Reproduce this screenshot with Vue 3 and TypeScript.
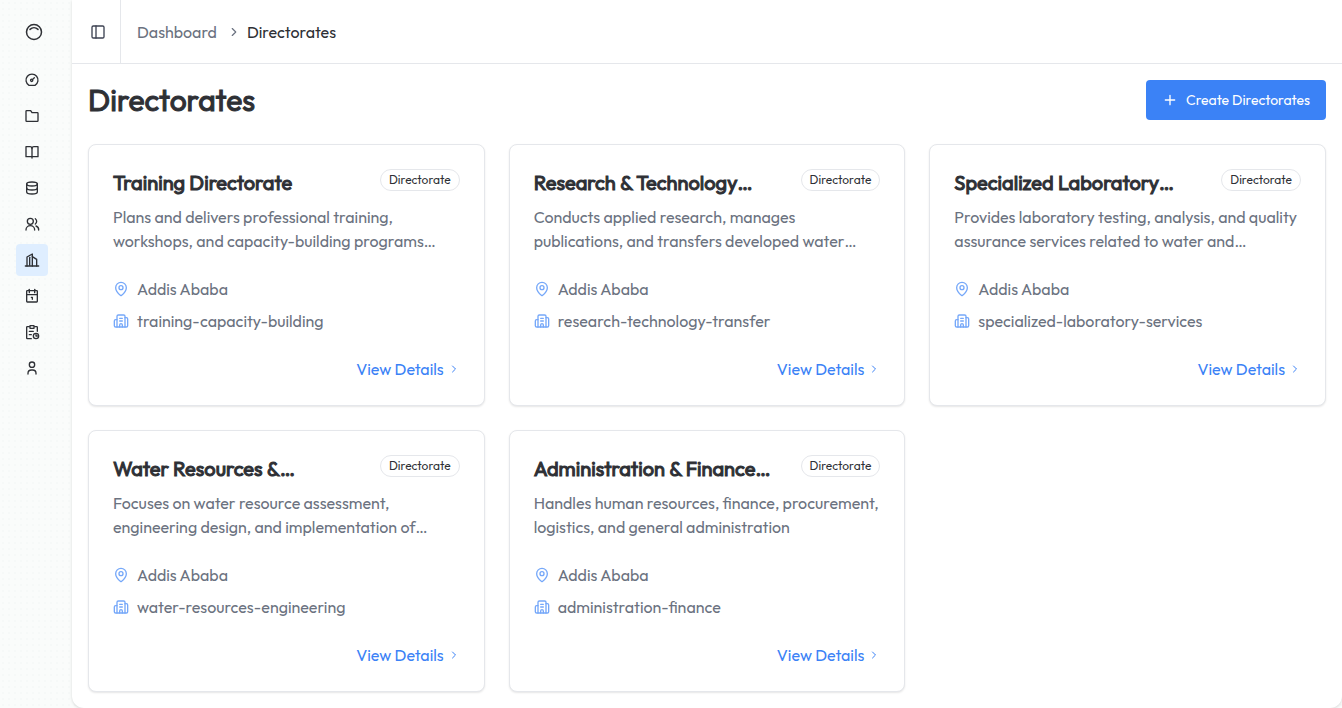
<script setup lang="ts">
interface NavItem {
  label: string
  paths: string[]
  active?: boolean
}

interface Directorate {
  title: string
  description: string
  location: string
  slug: string
}

const navItems: NavItem[] = [
  {
    label: 'Dashboard',
    paths: [
      'M7.5 20A9 9 0 1 1 16.5 20Z',
      'M13.2 12.5a1.7 1.7 0 1 1-3.4 0 1.7 1.7 0 0 1 3.4 0Z',
      'M12.6 11.4 15.5 8.5',
    ],
  },
  { label: 'Files', paths: ['M4 4h6l2 3h8a1 1 0 0 1 1 1v11a1 1 0 0 1-1 1H4a1 1 0 0 1-1-1V5a1 1 0 0 1 1-1Z'] },
  { label: 'Library', paths: ['M3 4h6a3 3 0 0 1 3 3 3 3 0 0 1 3-3h6v15H3Z', 'M12 7v14'] },
  {
    label: 'Data',
    paths: [
      'M4 6c0-4 16-4 16 0s-16 4-16 0Z',
      'M4 6v12c0 4 16 4 16 0V6',
      'M4 12c0 4 16 4 16 0',
    ],
  },
  {
    label: 'Users',
    paths: [
      'M3 21a6 6 0 0 1 13 0',
      'M14 8a4 4 0 1 1-9 0 4 4 0 0 1 9 0Z',
      'M17 4a5 5 0 0 1 0 8',
      'M18 15a6 6 0 0 1 4 6',
    ],
  },
  {
    label: 'Directorates',
    active: true,
    paths: ['M2 21h20', 'M4.5 21V7.5L12.5 3v18', 'M12.5 7l6.5 4v10', 'M8.5 8v12'],
  },
  {
    label: 'Calendar',
    paths: ['M5 4h14a1 1 0 0 1 1 1v15a1 1 0 0 1-1 1H5a1 1 0 0 1-1-1V5a1 1 0 0 1 1-1Z', 'M8 2v5', 'M16 2v5', 'M4 10h16', 'M11 14h1.5v3'],
  },
  {
    label: 'Tasks',
    paths: [
      'M8 4H5a1 1 0 0 0-1 1v16a1 1 0 0 0 1 1h6',
      'M16 4h3a1 1 0 0 1 1 1v6',
      'M9 2.5h6v4H9Z',
      'M8 11h6',
      'M8 16h3',
      'M22 18a4 4 0 1 1-8 0 4 4 0 0 1 8 0Z',
      'M18 16v2h2',
    ],
  },
  { label: 'Profile', paths: ['M16 7a4 4 0 1 1-8 0 4 4 0 0 1 8 0Z', 'M6 21v-1a5 5 0 0 1 5-5h2a5 5 0 0 1 5 5v1'] },
]

const directorates: Directorate[] = [
  {
    title: 'Training Directorate',
    description: 'Plans and delivers professional training,\nworkshops, and capacity-building programs…',
    location: 'Addis Ababa',
    slug: 'training-capacity-building',
  },
  {
    title: 'Research & Technology…',
    description: 'Conducts applied research, manages\npublications, and transfers developed water…',
    location: 'Addis Ababa',
    slug: 'research-technology-transfer',
  },
  {
    title: 'Specialized Laboratory…',
    description: 'Provides laboratory testing, analysis, and quality\nassurance services related to water and…',
    location: 'Addis Ababa',
    slug: 'specialized-laboratory-services',
  },
  {
    title: 'Water Resources &…',
    description: 'Focuses on water resource assessment,\nengineering design, and implementation of…',
    location: 'Addis Ababa',
    slug: 'water-resources-engineering',
  },
  {
    title: 'Administration & Finance…',
    description: 'Handles human resources, finance, procurement,\nlogistics, and general administration',
    location: 'Addis Ababa',
    slug: 'administration-finance',
  },
]
</script>

<template>
  <div class="shell">
    <aside class="sidebar">
      <a class="logo" href="#" aria-label="Home">
        <svg class="logo-icon" viewBox="0 0 20 20">
          <circle cx="10" cy="10" r="7.5" />
          <path d="M6 7.4c2.3-2.2 5.7-2.2 8 0" />
        </svg>
      </a>
      <nav class="nav" aria-label="Main">
        <a
          v-for="item in navItems"
          :key="item.label"
          class="nav-link"
          :class="{ active: item.active }"
          href="#"
          :aria-label="item.label"
        >
          <svg class="icon" viewBox="0 0 24 24">
            <path v-for="d in item.paths" :key="d" :d="d" />
          </svg>
        </a>
      </nav>
    </aside>

    <main class="main">
      <header class="topbar">
        <button class="toggle" type="button" aria-label="Toggle sidebar">
          <svg class="icon" viewBox="0 0 24 24">
            <rect x="3" y="3" width="18" height="18" rx="2" />
            <path d="M9 3v18" />
          </svg>
        </button>
        <nav class="crumbs" aria-label="Breadcrumb">
          <a class="crumb" href="#">Dashboard</a>
          <svg class="crumb-sep" viewBox="0 0 24 24"><path d="m9 18 6-6-6-6" /></svg>
          <span class="crumb-current">Directorates</span>
        </nav>
      </header>

      <section class="content">
        <div class="heading">
          <h1>Directorates</h1>
          <button class="create" type="button">
            <svg class="icon" viewBox="0 0 24 24"><path d="M5 12h14M12 5v14" /></svg>
            Create Directorates
          </button>
        </div>

        <div class="grid">
          <article v-for="d in directorates" :key="d.slug" class="card">
            <div class="card-head">
              <h2>{{ d.title }}</h2>
              <span class="badge">Directorate</span>
            </div>
            <p class="description">{{ d.description }}</p>
            <ul class="facts">
              <li>
                <svg class="icon fact-icon" viewBox="0 0 24 24">
                  <path d="M20 10c0 4.993-5.539 10.193-7.399 11.799a1 1 0 0 1-1.202 0C9.539 20.193 4 14.993 4 10a8 8 0 0 1 16 0" />
                  <circle cx="12" cy="10" r="3" />
                </svg>
                {{ d.location }}
              </li>
              <li>
                <svg class="icon fact-icon" viewBox="0 0 24 24">
                  <path d="M10 12h4M10 8h4M14 21v-3a2 2 0 0 0-4 0v3" />
                  <path d="M6 10H4a2 2 0 0 0-2 2v7a2 2 0 0 0 2 2h16a2 2 0 0 0 2-2V9a2 2 0 0 0-2-2h-2" />
                  <path d="M6 21V5a2 2 0 0 1 2-2h8a2 2 0 0 1 2 2v16" />
                </svg>
                {{ d.slug }}
              </li>
            </ul>
            <a class="details" href="#">
              View Details
              <svg class="details-icon" viewBox="0 0 24 24"><path d="m9 18 6-6-6-6" /></svg>
            </a>
          </article>
        </div>
      </section>
    </main>
  </div>
</template>

<style>
body {
  margin: 0;
  background: #fafcfb;
}
</style>

<style scoped>
* {
  box-sizing: border-box;
}

.shell {
  display: flex;
  min-height: 100vh;
  font-family: Outfit, Lato, sans-serif;
  font-size: 16px;
  line-height: 24px;
  color: #2e3035;
  background-color: #fafcfb;
  background-image: radial-gradient(#f6f9f8 1px, transparent 1px);
  background-size: 6px 6px;
}

a {
  color: inherit;
  text-decoration: none;
}

button {
  font: inherit;
  border: 0;
  padding: 0;
  cursor: pointer;
}

svg {
  display: block;
  flex: none;
  fill: none;
  stroke: currentColor;
  stroke-width: 2;
  stroke-linecap: round;
  stroke-linejoin: round;
}

.icon {
  width: 16px;
  height: 16px;
}

.sidebar {
  flex: none;
  width: 72px;
  padding: 0 16px;
}

.logo {
  display: flex;
  align-items: center;
  height: 64px;
  padding-left: 8px;
}

.logo-icon {
  width: 20px;
  height: 20px;
  stroke-width: 1.5;
}

.nav {
  display: flex;
  flex-direction: column;
  gap: 4px;
}

.nav-link {
  display: flex;
  align-items: center;
  justify-content: center;
  width: 32px;
  height: 32px;
  border-radius: 4px;
}

.nav-link.active {
  background: #dfeeff;
}

.main {
  flex: 1;
  min-width: 0;
  background: #fff;
  border-radius: 0 0 12px 12px;
  box-shadow: 0 1px 3px rgba(0, 0, 0, 0.14);
}

.topbar {
  display: flex;
  height: 64px;
  border-bottom: 1px solid #e5e7eb;
}

.toggle {
  display: flex;
  align-items: center;
  justify-content: center;
  width: 49px;
  padding-left: 4px;
  background: none;
  border-right: 1px solid #e5e7eb;
  color: #3d4252;
}

.crumbs {
  display: flex;
  align-items: center;
  gap: 6px;
  padding-left: 16px;
}

.crumb {
  margin-right: 4px;
  color: #6b7280;
}

.crumb-sep {
  width: 14px;
  height: 14px;
  color: #6b7280;
}

.content {
  padding: 16px;
}

.heading {
  display: flex;
  align-items: center;
  justify-content: space-between;
  margin-bottom: 24px;
}

h1,
h2,
p,
ul {
  margin: 0;
  padding: 0;
}

h1,
h2 {
  font-weight: 400;
  -webkit-text-stroke: 1px currentColor;
}

h1 {
  font-size: 30px;
  line-height: 40px;
}

.create {
  display: flex;
  align-items: center;
  gap: 8px;
  height: 40px;
  padding: 0 16px;
  border-radius: 4px;
  background: #3b82f6;
  color: #fff;
  font-size: 14px;
}

.grid {
  display: grid;
  grid-template-columns: repeat(3, minmax(0, 1fr));
  gap: 24px;
}

.card {
  display: flex;
  flex-direction: column;
  padding: 24px;
  border: 1px solid #e5e7eb;
  border-radius: 8px;
  background: #fff;
  box-shadow: 0 1px 2px rgba(0, 0, 0, 0.1);
}

.card-head {
  display: flex;
  align-items: flex-start;
  justify-content: space-between;
  margin-bottom: 8px;
}

h2 {
  font-size: 20px;
  line-height: 28px;
  white-space: nowrap;
}

.badge {
  flex: none;
  padding: 2px 8px;
  border: 1px solid #e5e7eb;
  border-radius: 11px;
  font-size: 12px;
  line-height: 16px;
}

.description {
  height: 48px;
  margin-bottom: 24px;
  color: #6b7280;
  white-space: pre;
}

.facts {
  display: flex;
  flex-direction: column;
  gap: 8px;
  margin-bottom: 24px;
  list-style: none;
  color: #6b7280;
}

.facts li {
  display: flex;
  align-items: center;
  gap: 8px;
}

.fact-icon {
  color: #76a8f9;
}

.details {
  display: flex;
  align-items: center;
  align-self: flex-end;
  gap: 4px;
  color: #3b82f6;
}

.details-icon {
  width: 12px;
  height: 12px;
}
</style>
